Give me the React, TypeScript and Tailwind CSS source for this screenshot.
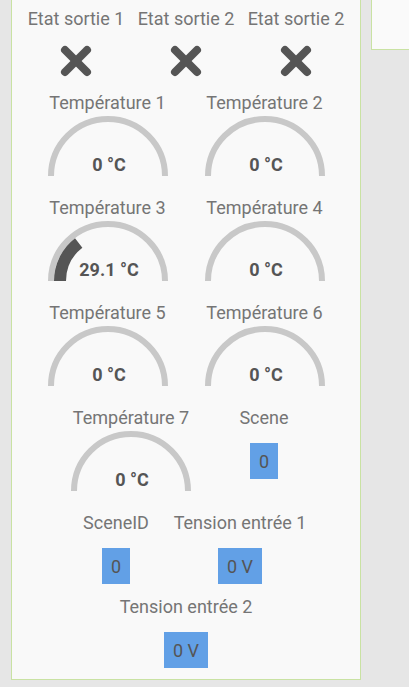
import React from "react";

const Label = ({ children }: { children: React.ReactNode }) => (
  <div className="text-[18px] leading-[18px] text-[#757575] whitespace-nowrap">{children}</div>
);

const XIcon = () => (
  <svg width="32" height="32" viewBox="0 0 32 32" className="mt-[17px]">
    <line x1="5" y1="5" x2="27" y2="27" stroke="#555555" strokeWidth="8" strokeLinecap="round" />
    <line x1="27" y1="5" x2="5" y2="27" stroke="#555555" strokeWidth="8" strokeLinecap="round" />
  </svg>
);

const Gauge = ({ value, text }: { value: number; text: string }) => {
  const cx = 60;
  const cy = 60;
  const r = 48;
  const ang = Math.PI - (value / 100) * Math.PI;
  const ex = cx + r * Math.cos(ang);
  const ey = cy - r * Math.sin(ang);
  return (
    <svg width="120" height="60" viewBox="0 0 120 60" className="mt-[4px]">
      <path d="M 3 60 A 57 57 0 0 1 117 60" fill="none" stroke="#c8c8c8" strokeWidth="6" />
      {value > 0 && (
        <path d={`M 12 60 A ${r} ${r} 0 0 1 ${ex} ${ey}`} fill="none" stroke="#555555" strokeWidth="12" />
      )}
      <text
        x="61"
        y="55"
        textAnchor="middle"
        fontSize="18"
        fontWeight="bold"
        fill="#555555"
        fontFamily="Roboto, sans-serif"
      >
        {text}
      </text>
    </svg>
  );
};

const TempItem = ({ label, value, text, w = "w-[157px]" }: { label: string; value: number; text: string; w?: string }) => (
  <div className={`${w} flex flex-col items-center`}>
    <Label>{label}</Label>
    <Gauge value={value} text={text} />
  </div>
);

const BoxItem = ({ label, value, w }: { label: string; value: string; w: string }) => (
  <div className={`${w} flex flex-col items-center`}>
    <Label>{label}</Label>
    <div className="mt-[16px] h-[36px] px-[9px] flex items-center bg-[#62a0e6] text-[18px] text-[#555555] whitespace-nowrap">
      {value}
    </div>
  </div>
);

export default function App() {
  return (
    <div className="min-h-[687px] bg-[#e6e6e6] flex items-start gap-[10px] pl-[11px] font-['Roboto',sans-serif]">
      <div className="w-[350px] shrink-0 bg-[#f9f9f9] border border-t-0 border-[#c9e2a3] pt-[10px] pb-[11px]">
        <div className="flex justify-center">
          {["Etat sortie 1", "Etat sortie 2", "Etat sortie 2"].map((l, i) => (
            <div key={i} className="w-[110px] flex flex-col items-center">
              <Label>{l}</Label>
              <XIcon />
            </div>
          ))}
        </div>
        <div className="flex justify-center mt-[17px]">
          <TempItem label="Température 1" value={0} text="0 °C" />
          <TempItem label="Température 2" value={0} text="0 °C" />
        </div>
        <div className="flex justify-center mt-[23px]">
          <TempItem label="Température 3" value={29.1} text="29.1 °C" />
          <TempItem label="Température 4" value={0} text="0 °C" />
        </div>
        <div className="flex justify-center mt-[23px]">
          <TempItem label="Température 5" value={0} text="0 °C" />
          <TempItem label="Température 6" value={0} text="0 °C" />
        </div>
        <div className="flex justify-center mt-[23px]">
          <TempItem label="Température 7" value={0} text="0 °C" w="w-[156px]" />
          <BoxItem label="Scene" value="0" w="w-[110px]" />
        </div>
        <div className="flex justify-center mt-[23px]">
          <BoxItem label="SceneID" value="0" w="w-[108px]" />
          <BoxItem label="Tension entrée 1" value="0 V" w="w-[140px]" />
        </div>
        <div className="flex justify-center mt-[14px]">
          <BoxItem label="Tension entrée 2" value="0 V" w="w-[150px]" />
        </div>
      </div>
      <div className="h-[50px] flex-1 bg-[#fafafa] border-l border-b border-[#c9e2a3]" />
    </div>
  );
}
